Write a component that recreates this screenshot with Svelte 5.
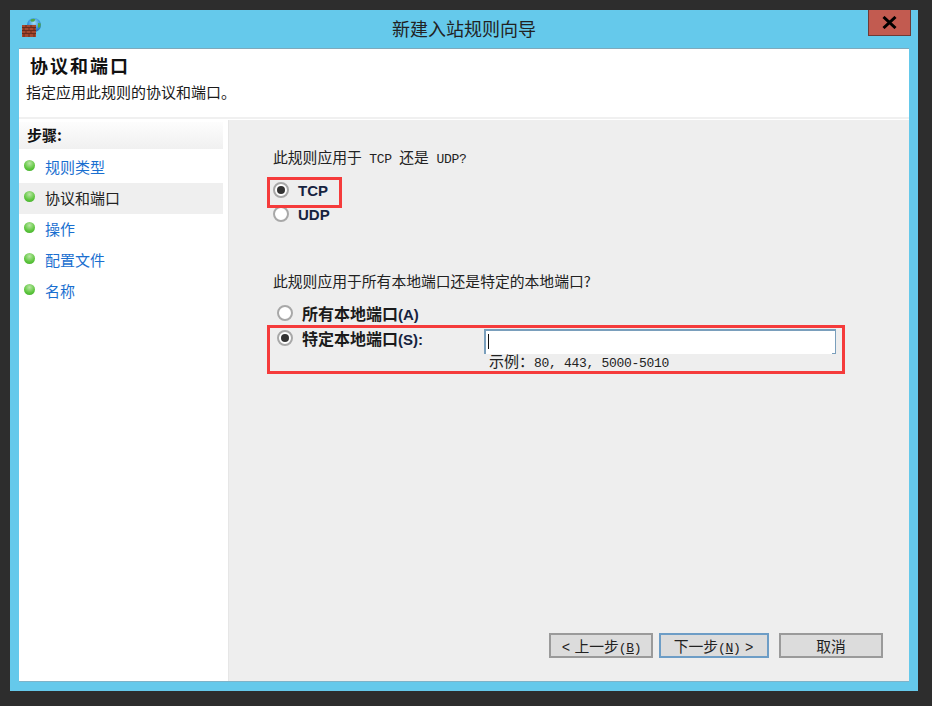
<script>
  const steps = [
    { label: '规则类型' },
    { label: '协议和端口', active: true },
    { label: '操作' },
    { label: '配置文件' },
    { label: '名称' }
  ];
</script>

<div class="window">
  <div class="titlebar">
    <svg class="appicon" width="20" height="19" viewBox="0 0 20 19">
      <defs>
        <radialGradient id="globe" cx="0.5" cy="0.35" r="0.7">
          <stop offset="0" stop-color="#a9e0f5" />
          <stop offset="0.55" stop-color="#3b9be2" />
          <stop offset="1" stop-color="#1c5aa8" />
        </radialGradient>
      </defs>
      <circle cx="12" cy="7" r="7" fill="url(#globe)" />
      <path d="M9 1.200c1.500-.7 3.500-.8 4.500 .2l-1.500 2-2.500 .3-1.200-1.200z" fill="#4ea845" />
      <path d="M16 5l2.800 .5-.5 3.500-2.300 1z" fill="#4ea845" />
      <rect x="0" y="7" width="14" height="12" fill="#a5492f" />
      <path d="M0 9.500h14M0 12.500h14M0 15.500h14M4 7v2.500M9 7v2.500M2 9.500v3M7 9.500v3M12 9.500v3M4 12.500v3M9 12.500v3M2 15.500v3.500M7 15.500v3.500M12 15.500v3.500" stroke="#6b2c1c" stroke-width="1" fill="none" />
    </svg>
    <div class="title">新建入站规则向导</div>
    <div class="close">
      <svg width="15" height="13" viewBox="0 0 15 13">
        <path d="M1.500 1l12 11M13.500 1l-12 11" stroke="#000" stroke-width="3" fill="none" />
      </svg>
    </div>
  </div>

  <div class="client">
    <header class="head">
      <h1>协议和端口</h1>
      <p>指定应用此规则的协议和端口。</p>
    </header>

    <div class="body">
      <nav class="side">
        <div class="side-head">步骤:</div>
        <ul>
          {#each steps as s}
            <li class:active={s.active}>
              <span class="dot"></span>
              <span class="step">{s.label}</span>
            </li>
          {/each}
        </ul>
      </nav>

      <main class="panel">
        <div class="q q1">此规则应用于<span class="m pad">TCP</span>还是<span class="m padl">UDP?</span></div>

        <div class="mark mark-tcp"></div>
        <div class="opt opt-tcp">
          <span class="radio on"></span>
          <span class="lab lat">TCP</span>
        </div>
        <div class="opt opt-udp">
          <span class="radio"></span>
          <span class="lab lat">UDP</span>
        </div>

        <div class="q q2">此规则应用于所有本地端口还是特定的本地端口?</div>

        <div class="opt opt-all">
          <span class="radio"></span>
          <span class="lab">所有本地端口<span class="lat">(A)</span></span>
        </div>

        <div class="mark mark-port"></div>
        <div class="opt opt-port">
          <span class="radio on"></span>
          <span class="lab fixed">特定本地端口<span class="lat">(S):</span></span>
          <div class="field">
            <div class="input"><span class="caret"></span></div>
            <div class="hint">示例：<span class="m">80, 443, 5000-5010</span></div>
          </div>
        </div>

        <div class="buttons">
          <div class="btn prev"><span class="chev">&lt;</span> 上一步<span class="m">(<u>B</u>)</span></div>
          <div class="btn next">下一步<span class="m">(<u>N</u>)</span> <span class="chev">&gt;</span></div>
          <div class="btn cancel">取消</div>
        </div>
      </main>
    </div>
  </div>
</div>

<style>
  :global(body) {
    margin: 0;
    background: #2d2d2d;
    font-family: "Noto Sans CJK SC", sans-serif;
    color: #1a1a1a;
  }
  .window {
    box-sizing: border-box;
    width: 908px;
    height: 681px;
    margin: 10px 14px 15px 10px;
    padding: 0 9px 9px;
    background: #65c9eb;
    display: flex;
    flex-direction: column;
    position: relative;
  }
  .titlebar {
    height: 38px;
    flex: none;
    display: flex;
    align-items: flex-start;
    justify-content: center;
    position: relative;
  }
  .appicon {
    position: absolute;
    left: 3px;
    top: 8px;
  }
  .title {
    font-size: 18px;
    line-height: 24px;
    margin-top: 6px;
    color: #222;
  }
  .close {
    position: absolute;
    right: -2px;
    top: 0;
    box-sizing: border-box;
    width: 43px;
    height: 26px;
    background: #c25b50;
    border: 1px solid #6e3b36;
    border-top: 0;
    display: flex;
    align-items: center;
    justify-content: center;
  }
  .client {
    flex: 1;
    min-height: 0;
    background: #fff;
    display: flex;
    flex-direction: column;
    border-top: 1px solid #7fa9bb;
    border-bottom: 1px solid #7fb3c8;
  }
  .head {
    height: 70px;
    flex: none;
    box-sizing: border-box;
    border-bottom: 2px solid #f0f0f0;
    padding: 0 0 0 7px;
    background: #fff;
  }
  .head h1 {
    margin: 0;
    font-size: 18px;
    letter-spacing: 2px;
    line-height: 24px;
    padding: 4px 0 0 4px;
    font-weight: 700;
    color: #111;
  }
  .head p {
    margin: 4px 0 0;
    font-size: 15px;
    line-height: 21px;
    color: #1a1a1a;
  }
  .body {
    flex: 1;
    min-height: 0;
    display: flex;
  }
  .side {
    width: 209px;
    flex: none;
    padding-top: 3px;
    background: #fff;
    box-sizing: border-box;
  }
  .side-head {
    width: 204px;
    height: 27px;
    box-sizing: border-box;
    padding-left: 8px;
    font-size: 15px;
    line-height: 26px;
    font-weight: 700;
    color: #111;
    background: linear-gradient(#fdfdfd, #f0f0f0);
  }
  .side ul {
    list-style: none;
    margin: 3px 0 0;
    padding: 0;
    width: 204px;
  }
  .side li {
    height: 31px;
    display: flex;
    align-items: center;
    padding-left: 5px;
    box-sizing: border-box;
  }
  .side li.active {
    background: #efefef;
  }
  .dot {
    width: 11px;
    height: 11px;
    border-radius: 50%;
    margin-top: -4px;
    background: radial-gradient(circle at 50% 30%, #b9e6a4 0%, #5cc53c 60%, #3ea82c 100%);
    flex: none;
  }
  .step {
    margin-left: 10px;
    font-size: 15px;
    line-height: 20px;
    margin-top: -1px;
    color: #1a6fd0;
  }
  li.active .step {
    color: #222;
  }
  .panel {
    flex: 1;
    position: relative;
    background: #eeeeee;
    border-left: 1px solid #e6e6e6;
    margin-top: 1px;
    padding: 27px 0 0 44px;
    display: flex;
    flex-direction: column;
    font-size: 14.800px;
    min-width: 0;
  }
  .m {
    font-family: "Liberation Mono", "DejaVu Sans Mono", monospace;
    font-size: 13px;
    letter-spacing: -0.300px;
  }
  .pad {
    margin: 0 7.500px;
  }
  .padl {
    margin-left: 7.500px;
  }
  .q {
    line-height: 20px;
    height: 20px;
    color: #222;
    white-space: pre;
  }
  .opt {
    display: flex;
    align-items: flex-start;
    position: relative;
  }
  .radio {
    box-sizing: border-box;
    width: 16px;
    height: 16px;
    border-radius: 50%;
    border: 2px solid #a8a8a8;
    background: #fff;
    flex: none;
    position: relative;
  }
  .radio.on::after {
    content: "";
    position: absolute;
    left: 2px;
    top: 2px;
    width: 8px;
    height: 8px;
    border-radius: 50%;
    background: #333;
  }
  .lab {
    font-weight: 700;
    font-size: 16px;
    line-height: 20px;
    color: #1b1b1b;
    white-space: nowrap;
    margin-top: -2px;
  }
  .lat {
    font-family: "Liberation Sans", Arial, sans-serif;
    font-size: 15px;
    color: #16233f;
  }
  .opt-tcp {
    margin: 15px 0 0 0;
    gap: 9px;
    height: 24px;
  }
  .opt-tcp .lab,
  .opt-udp .lab {
    margin-top: -1px;
  }
  .opt-udp {
    margin: 0;
    gap: 9px;
    height: 20px;
  }
  .q2 {
    margin-top: 45px;
  }
  .opt-all {
    margin: 14px 0 0 4px;
    gap: 9px;
    height: 25px;
  }
  .opt-port {
    gap: 9px;
    margin: 0 0 0 4px;
  }
  .fixed {
    width: 173px;
  }
  .field {
    width: 352px;
    margin-top: -1px;
  }
  .input {
    box-sizing: border-box;
    height: 25px;
    background: #fff;
    border-top: 2px solid #7a9fbc;
    border-left: 2px solid #7a9fbc;
    border-right: 1px solid #7a9fbc;
    position: relative;
  }
  .input::after {
    content: "";
    position: absolute;
    right: 0;
    bottom: 0;
    width: 3px;
    height: 1px;
    background: #7a9fbc;
  }
  .caret {
    position: absolute;
    left: 2px;
    top: 3px;
    width: 1px;
    height: 15px;
    background: #111;
  }
  .hint {
    font-size: 15px;
    line-height: 13px;
    padding-left: 5px;
    color: #222;
    white-space: pre;
  }
  .mark {
    position: absolute;
    box-sizing: border-box;
    border: 3px solid #f53b3b;
    pointer-events: none;
    z-index: 1;
  }
  .mark-tcp {
    left: 38px;
    top: 57px;
    width: 75px;
    height: 31px;
  }
  .mark-port {
    left: 38px;
    top: 205px;
    width: 578px;
    height: 49px;
  }
  .buttons {
    margin-top: auto;
    margin-bottom: 23px;
    margin-left: 276px;
    display: flex;
  }
  .btn {
    box-sizing: border-box;
    height: 25px;
    background: #dcdcdc;
    border: 2px solid #9a9a9a;
    font-size: 14.800px;
    line-height: 21px;
    text-align: center;
    color: #222;
    white-space: pre;
  }
  .prev {
    width: 104px;
    margin-right: 6px;
  }
  .next {
    width: 110px;
    margin-right: 10px;
    border-color: #6d9dc6;
  }
  .cancel {
    width: 104px;
  }
  .chev {
    font-family: "Liberation Mono", monospace;
    font-size: 14px;
    padding: 0 1px;
  }
</style>
